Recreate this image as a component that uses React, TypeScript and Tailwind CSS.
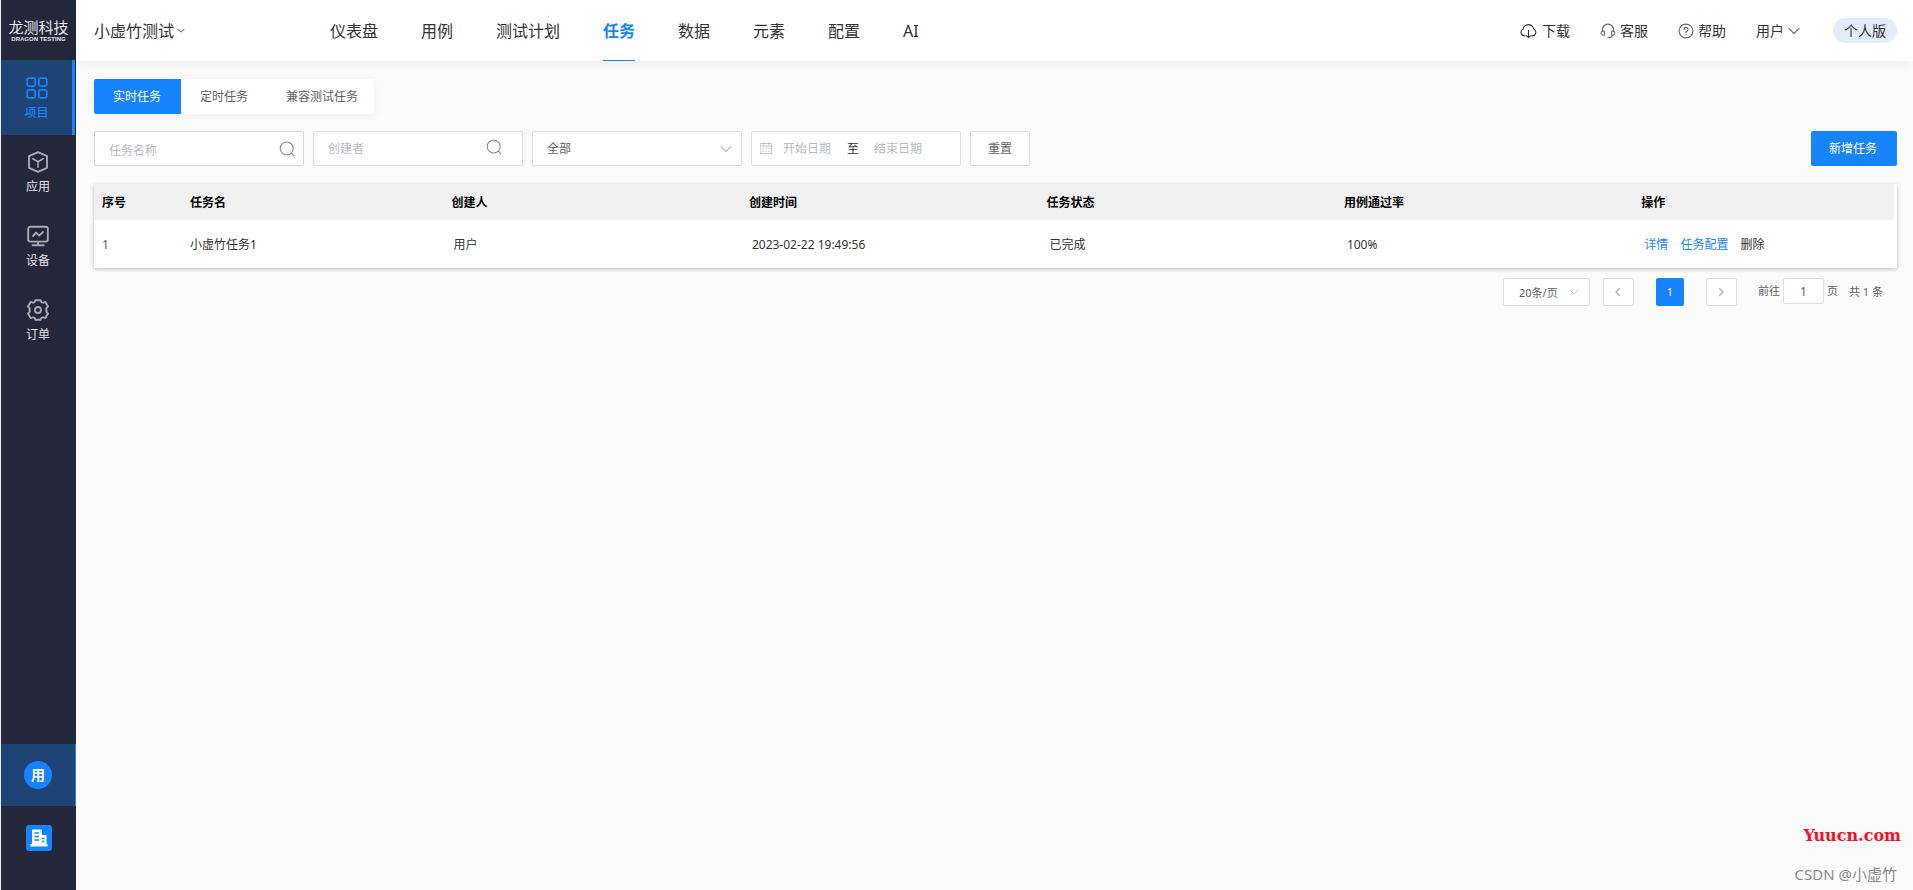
import type { ReactNode, SVGProps } from "react";

type IconProps = SVGProps<SVGSVGElement>;

function Icon({ children, ...rest }: IconProps & { children: ReactNode }) {
  return (
    <svg fill="none" stroke="currentColor" strokeLinecap="round" strokeLinejoin="round" aria-hidden="true" {...rest}>
      {children}
    </svg>
  );
}

const GridIcon = () => (
  <Icon width="22" height="22" viewBox="0 0 22 22" strokeWidth="1.7">
    <rect x="1.2" y="1.2" width="8" height="8" rx="1.6" />
    <rect x="12.8" y="1.2" width="8" height="8" rx="1.6" />
    <rect x="1.2" y="12.8" width="8" height="8" rx="1.6" />
    <rect x="12.8" y="12.8" width="8" height="8" rx="1.6" />
  </Icon>
);

const CubeIcon = () => (
  <Icon width="22" height="22" viewBox="0 0 22 22" strokeWidth="1.9">
    <path d="M11 1.2 20 5.2V16.8L11 20.8 2 16.8V5.2Z" />
    <path d="M5.8 7.8 11 10.8 16.2 7.8M11 10.8V16.2" strokeWidth="1.6" />
  </Icon>
);

const MonitorIcon = () => (
  <Icon width="22" height="22" viewBox="0 0 22 22" strokeWidth="1.9">
    <rect x="1.2" y="1.8" width="19.6" height="14.8" rx="2" />
    <path d="M6 11 9 7.6 12.2 10.6 16 7" />
    <path d="M11 16.8V19.6M5.4 20.2H16.6" />
  </Icon>
);

const GearIcon = () => (
  <Icon width="22" height="22" viewBox="0 0 22 22" strokeWidth="1.9">
    <path d="M8.4 1.2h5.2c.2 1.8 1.7 2.8 3.4 2.2l1.4-.4 2.6 4.5c-1.6 1-2 2.5-1.4 3.5-.6 1-.2 2.5 1.4 3.5l-2.6 4.5-1.4-.4c-1.7-.6-3.2.4-3.4 2.2H8.4c-.2-1.8-1.7-2.8-3.4-2.2l-1.4.4-2.6-4.5c1.6-1 2-2.5 1.4-3.5.6-1 .2-2.5-1.4-3.5l2.6-4.5 1.4.4c1.7.6 3.2-.4 3.4-2.2Z" />
    <circle cx="11" cy="11" r="3" />
  </Icon>
);

const SearchIcon = () => (
  <Icon width="16" height="16" viewBox="0 0 16 16" strokeWidth="1.1">
    <circle cx="7.7" cy="7.5" r="6.5" />
    <path d="M12.4 12.2 14.8 14.6" />
  </Icon>
);

const ChevronDown = ({ size = 12 }: { size?: number }) => (
  <Icon width={size} height={size} viewBox="0 0 12 12" strokeWidth="1.1">
    <path d="M1 3.5 6 8.5 11 3.5" />
  </Icon>
);

const TitleChevron = () => (
  <Icon width="8" height="8" viewBox="0 0 8 8" strokeWidth="1.3">
    <path d="M1 2.6 4 4.8 7 2.6" />
  </Icon>
);

const CloudIcon = () => (
  <Icon width="17" height="16" viewBox="0 0 17 16" strokeWidth="1.1">
    <path d="M5.4 12.8H4.4A3.6 3.6 0 0 1 3.2 5.9 5.3 5.3 0 0 1 13.6 5.9 3.6 3.6 0 0 1 12.6 12.8H11.6" />
    <path d="M8.5 7.2V14.6M6.6 12.8 8.5 14.7 10.4 12.8" />
  </Icon>
);

const HeadsetIcon = () => (
  <Icon width="16" height="16" viewBox="0 0 16 16" strokeWidth="1.1">
    <path d="M2.4 8.2V6.7A5.6 5.6 0 0 1 13.6 6.7V8.2" />
    <path d="M4.3 8V12.2H3.2A1.9 1.9 0 0 1 1.2 10.3V9.9A1.9 1.9 0 0 1 3.2 8ZM11.7 8V12.2H12.8A1.9 1.9 0 0 0 14.8 10.3V9.9A1.9 1.9 0 0 0 12.8 8Z" />
    <path d="M12.9 12.3C12.3 13.8 11 14.6 9.2 14.7H7.8" />
  </Icon>
);

const HelpIcon = () => (
  <Icon width="16" height="16" viewBox="0 0 16 16" strokeWidth="1.1">
    <circle cx="8" cy="8" r="6.9" />
    <path d="M6 6.5A2 2 0 1 1 8.9 8.2C8.3 8.5 8 8.9 8 9.6M8 11.5V11.6" strokeWidth="1.2" />
  </Icon>
);

const CalendarIcon = () => (
  <Icon width="12" height="12" viewBox="0 0 12 12" strokeWidth="1">
    <path d="M.5 1.5H11.5V11.5H.5ZM.5 4H11.5M3.5.5V2.5M8.5.5V2.5" />
    <path d="M2.5 6.2H9.5M2.5 9H9.5" strokeDasharray="1 2" />
  </Icon>
);

const BuildingIcon = () => (
  <svg width="26" height="26" viewBox="0 0 26 26" aria-hidden="true">
    <rect width="26" height="26" rx="3" fill="#1684fc" />
    <path fill="#fff" d="M6 5.5Q6 4.500 7 4.500H15Q16 4.500 16 5.500V10H19.500Q20.500 10 20.500 11V19H21.500V21.500H4.500V19H6Z" />
    <path stroke="#1684fc" strokeWidth="1.3" d="M8.500 8H13M8.500 11.500H13M8.500 15H13M16 13.500H18.500M16 16.500H18.500" />
  </svg>
);

const sideItems = [
  { label: "应用", icon: <CubeIcon /> },
  { label: "设备", icon: <MonitorIcon /> },
  { label: "订单", icon: <GearIcon /> },
];

function Sidebar() {
  return (
    <aside className="flex w-[76px] shrink-0 flex-col border-l border-[#e8ebee] bg-[#24263a]">
      <div className="flex h-[60px] flex-col items-center justify-center gap-px pt-0.5 text-[#e4e5e9]">
        <span className="text-[15px] leading-4">龙测科技</span>
        <span className="whitespace-nowrap font-['Liberation_Sans'] text-[6px] leading-[7px] font-bold">DRAGON TESTING</span>
      </div>
      <nav className="flex flex-col">
        <a href="#project" className="mr-px flex h-[75px] flex-col items-center gap-1.5 border-r-[3px] border-[#1684fc] bg-[#204376] pt-[17px] text-xs text-[#1684fc]">
          <GridIcon />
          <span className="font-medium">项目</span>
        </a>
        {sideItems.map((item) => (
          <a key={item.label} href={`#${item.label}`} className="mr-px flex h-[74px] flex-col items-center gap-1.5 pt-4 text-xs text-[#e4e4e6]">
            <span className="text-[#a9aab0]">{item.icon}</span>
            <span>{item.label}</span>
          </a>
        ))}
      </nav>
      <div className="mt-auto flex flex-col">
        <button type="button" className="flex h-[62px] items-center justify-center border-r border-[#1684fc] bg-[#204376]">
          <span className="flex size-7 items-center justify-center rounded-full bg-[#1684fc] text-sm font-bold text-white">用</span>
        </button>
        <button type="button" aria-label="企业" className="flex h-[84px] justify-center pt-[19px]">
          <BuildingIcon />
        </button>
      </div>
    </aside>
  );
}

const navItems = ["仪表盘", "用例", "测试计划", "任务", "数据", "元素", "配置", "AI"];

function Header() {
  return (
    <header className="flex h-[61px] items-stretch bg-white pr-4 pl-[18px] text-[#333] shadow-[0_2px_12px_rgba(0,0,0,0.06)]">
      <button type="button" className="flex w-[236px] items-center gap-[3px] text-base">
        小虚竹测试
        <span className="text-[#888]">
          <TitleChevron />
        </span>
      </button>
      <nav className="flex gap-[43px] text-base">
        {navItems.map((item) => (
          <a
            key={item}
            href={`#${item}`}
            className={
              item === "任务"
                ? "flex items-center border-b border-[#1684fc] pt-px font-bold text-[#1684fc]"
                : "flex items-center"
            }
          >
            {item}
          </a>
        ))}
      </nav>
      <div className="ml-auto flex items-center text-sm">
        <div className="flex items-center gap-[30px]">
          <a href="#download" className="flex items-center gap-[5px]">
            <CloudIcon />
            下载
          </a>
          <a href="#service" className="flex items-center gap-1">
            <span className="text-[#666]">
              <HeadsetIcon />
            </span>
            客服
          </a>
          <a href="#help" className="flex items-center gap-1">
            <span className="text-[#666]">
              <HelpIcon />
            </span>
            帮助
          </a>
          <button type="button" className="flex items-center gap-1">
            用户
            <span className="text-[#777]">
              <ChevronDown />
            </span>
          </button>
        </div>
        <span className="ml-[33px] flex h-[25px] items-center rounded-full bg-[#e1ecff] px-[11px]">个人版</span>
      </div>
    </header>
  );
}

function Tabs() {
  return (
    <div role="tablist" className="flex h-[35px] self-start rounded-xs bg-white text-xs text-[#606266] shadow-[0_2px_12px_rgba(0,0,0,0.05)]">
      <button type="button" role="tab" aria-selected="true" className="rounded-l-xs bg-[#1684fc] pr-5 pl-[19px] text-white">
        实时任务
      </button>
      <button type="button" role="tab" aria-selected="false" className="pr-5 pl-[19px]">
        定时任务
      </button>
      <button type="button" role="tab" aria-selected="false" className="pr-4 pl-[18px]">
        兼容测试任务
      </button>
    </div>
  );
}

function Filters() {
  return (
    <div className="mt-[17px] flex gap-[9px] text-xs text-[#606266]">
      <label className="flex h-[35px] w-[210px] items-center rounded-xs border border-[#d5d6d9] bg-white pr-2 pl-[14px]">
        <input aria-label="任务名称" placeholder="任务名称" className="min-w-0 flex-1 pt-1 outline-none placeholder:text-[#b8bac0]" />
        <span className="text-[#888]">
          <SearchIcon />
        </span>
      </label>
      <label className="flex h-[35px] w-[210px] items-center rounded-xs border border-[#dcdfe6] bg-white pr-5 pl-[14px]">
        <input aria-label="创建者" placeholder="创建者" className="min-w-0 flex-1 outline-none placeholder:text-[#b8bcc4]" />
        <span className="pb-1 text-[#888]">
          <SearchIcon />
        </span>
      </label>
      <div className="grid h-[35px] w-[210px] items-center rounded-xs border border-[#dcdfe6] bg-white">
        <select aria-label="任务状态" className="col-start-1 row-start-1 h-full w-full appearance-none bg-transparent pl-[14px] outline-none">
          <option>全部</option>
        </select>
        <span className="pointer-events-none col-start-1 row-start-1 mr-[9px] justify-self-end text-[#c0c4cc]">
          <ChevronDown />
        </span>
      </div>
      <div className="flex h-[35px] w-[210px] items-center rounded-xs border border-[#dcdfe6] bg-white pl-2">
        <span className="mr-[11px] pb-0.5 text-[#c0c4cc]">
          <CalendarIcon />
        </span>
        <input aria-label="开始日期" placeholder="开始日期" className="w-16 outline-none placeholder:text-[#b8bcc4]" />
        <span className="text-[#303133]">至</span>
        <input aria-label="结束日期" placeholder="结束日期" className="ml-[15px] w-16 outline-none placeholder:text-[#b8bcc4]" />
      </div>
      <button type="button" className="h-[35px] rounded-xs border border-[#dcdfe6] bg-white px-[17px]">
        重置
      </button>
      <button type="button" className="ml-auto h-[35px] rounded-xs bg-[#1684fc] pr-5 pl-[18px] text-white">
        新增任务
      </button>
    </div>
  );
}

function TaskTable() {
  return (
    <div className="mt-[18px] bg-white shadow-[0_1px_4px_rgba(0,0,0,0.26)]">
      <table className="w-full table-fixed border-collapse text-left text-xs text-[#333]">
        <thead className="text-black">
          <tr className="h-9 bg-[#f0f0f0]">
            <th className="w-[88px] pt-0.5 pl-2">序号</th>
            <th className="w-[14.5%] pt-0.5 pl-2">任务名</th>
            <th className="w-[16.5%] pt-0.5 pl-2">创建人</th>
            <th className="w-[16.5%] pt-0.5 pl-2">创建时间</th>
            <th className="w-[16.5%] pt-0.5 pl-2">任务状态</th>
            <th className="w-[16.5%] pt-0.5 pl-2">用例通过率</th>
            <th className="pt-0.5 pl-2">操作</th>
            <td className="w-[3px] bg-white" />
          </tr>
        </thead>
        <tbody>
          <tr className="h-12">
            <td className="pt-0.5 pl-2 text-[#606266]">1</td>
            <td className="pt-0.5 pl-2">小虚竹任务1</td>
            <td className="pt-0.5 pl-[10px]">用户</td>
            <td className="pt-0.5 pl-[11px]">2023-02-22 19:49:56</td>
            <td className="pt-0.5 pl-[11px]">已完成</td>
            <td className="pt-0.5 pl-[11px]">100%</td>
            <td className="pt-0.5 pl-[11px]">
              <div className="flex gap-3">
                <a href="#detail" className="text-[#1684fc]">
                  详情
                </a>
                <a href="#config" className="text-[#1684fc]">
                  任务配置
                </a>
                <a href="#delete">删除</a>
              </div>
            </td>
            <td />
          </tr>
        </tbody>
      </table>
    </div>
  );
}

function Pagination() {
  const pageButton = "flex h-7 w-[31px] items-center justify-center rounded-xs border border-[#dcdfe6] bg-white text-[#b4b8c0]";
  return (
    <div className="mt-[10px] mr-[14px] flex items-start justify-end text-[11px] text-[#606266]">
      <div className="grid h-7 w-[87px] items-center rounded-xs border border-[#dcdfe6] bg-white">
        <select aria-label="每页条数" className="col-start-1 row-start-1 h-full w-full appearance-none bg-transparent pt-0.5 pl-[15px] outline-none">
          <option>20条/页</option>
        </select>
        <span className="pointer-events-none col-start-1 row-start-1 mr-[10px] justify-self-end text-[#c0c4cc]">
          <ChevronDown size={10} />
        </span>
      </div>
      <button type="button" aria-label="上一页" className={`ml-[13px] ${pageButton}`}>
        <Icon width="10" height="10" viewBox="0 0 10 10" strokeWidth="1.5">
          <path d="M6.5 1.5 3 5 6.5 8.5" />
        </Icon>
      </button>
      <button type="button" className="mx-[22px] size-7 rounded-xs bg-[#1684fc] text-white">
        1
      </button>
      <button type="button" aria-label="下一页" className={pageButton}>
        <Icon width="10" height="10" viewBox="0 0 10 10" strokeWidth="1.5">
          <path d="M3.5 1.5 7 5 3.5 8.5" />
        </Icon>
      </button>
      <label className="ml-[21px] flex h-[26px] items-center gap-[3px]">
        前往
        <input defaultValue="1" className="h-[26px] w-[41px] rounded-xs border border-[#dcdfe6] bg-white text-center text-xs outline-none" />
        页
      </label>
      <span className="ml-[11px] flex h-7 items-center whitespace-nowrap">共 1 条</span>
    </div>
  );
}

export default function App() {
  return (
    <div className="relative flex min-h-screen bg-[#fbfbfb] font-['Noto_Sans','Noto_Sans_CJK_SC',sans-serif]">
      <Sidebar />
      <div className="flex min-w-0 flex-1 flex-col">
        <Header />
        <main className="flex flex-col pt-[18px] pr-4 pl-[18px]">
          <Tabs />
          <Filters />
          <TaskTable />
          <Pagination />
        </main>
      </div>
      <div className="absolute right-3 bottom-1 flex flex-col items-end gap-4">
        <span className="font-['DejaVu_Serif',serif] text-base leading-5 font-bold text-[#fa0d24]">Yuucn.com</span>
        <span className="pr-1 text-[15px] leading-6 text-[#8c8c8c]">CSDN @小虚竹</span>
      </div>
    </div>
  );
}
